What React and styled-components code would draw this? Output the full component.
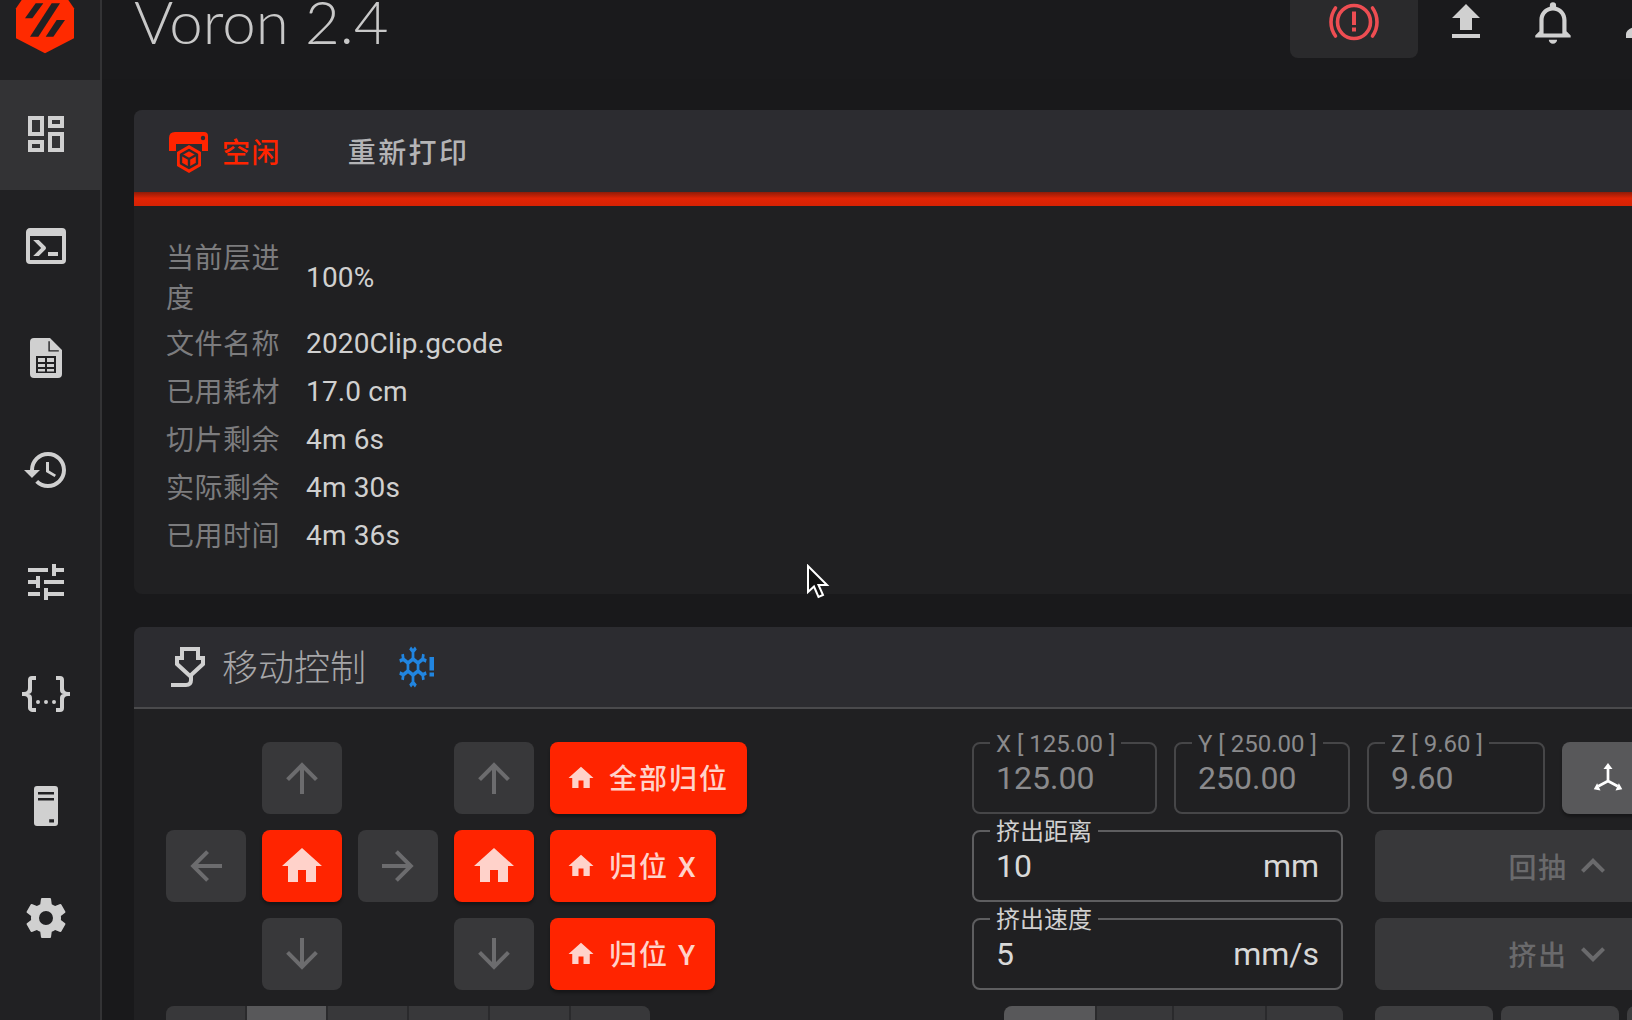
import React from 'react';
import styled, { createGlobalStyle } from 'styled-components';

const FONT = `Roboto, "Noto Sans CJK SC", sans-serif`;
const RED = '#ff2400';

const paths = {
  console: 'M20,19V7H4V19H20M20,3A2,2 0 0,1 22,5V19A2,2 0 0,1 20,21H4A2,2 0 0,1 2,19V5C2,3.89 2.9,3 4,3H20M13,17V15H18V17H13M9.58,13L5.57,9H8.4L11.7,12.3C12.09,12.69 12.09,13.33 11.7,13.72L8.42,17H5.59L9.58,13Z',
  dashboard: 'M19 5v2h-4V5h4M9 5v6H5V5h4m10 8v6h-4v-6h4M9 17v2H5v-2h4M21 3h-8v6h8V3zM11 3H3v10h8V3zm10 8h-8v10h8V11zm-10 4H3v6h8v-6z',
  history: 'M13 3a9 9 0 0 0-9 9H1l3.89 3.89.07.14L9 12H6c0-3.87 3.13-7 7-7s7 3.13 7 7-3.13 7-7 7c-1.93 0-3.68-.79-4.94-2.06l-1.42 1.42A8.954 8.954 0 0 0 13 21a9 9 0 0 0 0-18zm-1 5v5l4.28 2.54.72-1.21-3.5-2.08V8H12z',
  tune: 'M3 17v2h6v-2H3zM3 5v2h10V5H3zm10 16v-2h8v-2h-8v-2h-2v6h2zM7 9v2H3v2h4v2h2V9H7zm14 4v-2H11v2h10zm-6-4h2V7h4V5h-4V3h-2v6z',
  json: 'M5,3H7V5H5V10A2,2 0 0,1 3,12A2,2 0 0,1 5,14V19H7V21H5C3.93,20.73 3,20.1 3,19V15A2,2 0 0,0 1,13H0V11H1A2,2 0 0,0 3,9V5A2,2 0 0,1 5,3M19,3A2,2 0 0,1 21,5V9A2,2 0 0,0 23,11H24V13H23A2,2 0 0,0 21,15V19A2,2 0 0,1 19,21H17V19H19V14A2,2 0 0,1 21,12A2,2 0 0,1 19,10V5H17V3H19M12,15A1,1 0 0,1 13,16A1,1 0 0,1 12,17A1,1 0 0,1 11,16A1,1 0 0,1 12,15M8,15A1,1 0 0,1 9,16A1,1 0 0,1 8,17A1,1 0 0,1 7,16A1,1 0 0,1 8,15M16,15A1,1 0 0,1 17,16A1,1 0 0,1 16,17A1,1 0 0,1 15,16A1,1 0 0,1 16,15Z',
  cog: 'M12,15.5A3.5,3.5 0 0,1 8.5,12A3.5,3.5 0 0,1 12,8.5A3.5,3.5 0 0,1 15.5,12A3.5,3.5 0 0,1 12,15.5M19.43,12.97C19.47,12.65 19.5,12.33 19.5,12C19.5,11.67 19.47,11.34 19.43,11L21.54,9.37C21.73,9.22 21.78,8.95 21.66,8.73L19.66,5.27C19.54,5.05 19.27,4.96 19.05,5.05L16.56,6.05C16.04,5.66 15.5,5.32 14.87,5.07L14.5,2.42C14.46,2.18 14.25,2 14,2H10C9.75,2 9.54,2.18 9.5,2.42L9.13,5.07C8.5,5.32 7.96,5.66 7.44,6.05L4.95,5.05C4.73,4.96 4.46,5.05 4.34,5.27L2.34,8.73C2.21,8.95 2.27,9.22 2.46,9.37L4.57,11C4.53,11.34 4.5,11.67 4.5,12C4.5,12.33 4.53,12.65 4.57,12.97L2.46,14.63C2.27,14.78 2.21,15.05 2.34,15.27L4.34,18.73C4.46,18.95 4.73,19.03 4.95,18.95L7.44,17.94C7.96,18.34 8.5,18.68 9.13,18.93L9.5,21.58C9.54,21.82 9.75,22 10,22H14C14.25,22 14.46,21.82 14.5,21.58L14.87,18.93C15.5,18.67 16.04,18.34 16.56,17.94L19.05,18.95C19.27,19.03 19.54,18.95 19.66,18.73L21.66,15.27C21.78,15.05 21.73,14.78 21.54,14.63L19.43,12.97Z',
  home: 'M10,20V14H14V20H19V12H22L12,3L2,12H5V20H10Z',
  up: 'M13,20H11V8L5.5,13.5L4.08,12.08L12,4.16L19.92,12.08L18.5,13.5L13,8V20Z',
  down: 'M11,4H13V16L18.5,10.5L19.92,11.92L12,19.84L4.08,11.92L5.5,10.5L11,16V4Z',
  left: 'M20,11V13H8L13.5,18.5L12.08,19.92L4.16,12L12.08,4.08L13.5,5.5L8,11H20Z',
  right: 'M4,11V13H16L10.5,18.5L11.92,19.92L19.84,12L11.92,4.08L10.5,5.5L16,11H4Z',
  chevronUp: 'M7.41,15.41L12,10.83L16.59,15.41L18,14L12,8L6,14L7.41,15.41Z',
  chevronDown: 'M7.41,8.58L12,13.17L16.59,8.58L18,10L12,16L6,10L7.41,8.58Z',
  upload: 'M9,16V10H5L12,3L19,10H15V16H9M5,20V18H19V20H5Z',
  bell: 'M16,17H7V10.5C7,8 9,6 11.5,6C14,6 16,8 16,10.5M18,16V10.5C18,7.43 15.86,4.86 13,4.18V3.5A1.5,1.5 0 0,0 11.5,2A1.5,1.5 0 0,0 10,3.5V4.18C7.13,4.86 5,7.43 5,10.5V16L3,18V19H20V18M11.5,22A2,2 0 0,0 13.5,20H9.5A2,2 0 0,0 11.5,22Z',
  account: 'M12,4A4,4 0 0,1 16,8A4,4 0 0,1 12,12A4,4 0 0,1 8,8A4,4 0 0,1 12,4M12,14C16.42,14 20,15.79 20,18V20H4V18C4,15.79 7.58,14 12,14Z',
};

const Global = createGlobalStyle`
  html, body {
    margin: 0;
    background: #19191b;
    overflow: hidden;
  }
  * { box-sizing: border-box; }
`;

const Page = styled.div`
  position: relative;
  display: flex;
  width: 1632px;
  height: 1020px;
  overflow: hidden;
  font-family: ${FONT};
  background: #19191b;
`;

const Sidebar = styled.nav`
  flex: 0 0 102px;
  background: #212123;
  border-right: 2px solid #333335;
`;

const LogoSlot = styled.div`
  height: 78px;
  padding-left: 5px;
`;

const NavItem = styled.div`
  display: flex;
  align-items: center;
  justify-content: center;
  height: 112px;
  padding-right: 8px;
  color: #d0d0d0;
  background: ${p => (p.$active ? 'linear-gradient(transparent 2px, #333335 2px)' : 'transparent')};
`;

const Svg = styled.svg`
  display: block;
  flex: none;
  fill: currentColor;
`;

const BrakeSvg = styled(Svg)`
  margin-top: -2px;
`;

const StatusSvg = styled(Svg)`
  margin-top: 4px;
`;

const SnowSvg = styled(Svg)`
  color: #2185e0;
`;

const Main = styled.main`
  flex: none;
  width: 1700px;
`;

const Header = styled.header`
  display: flex;
  align-items: flex-start;
  width: 1584px;
  height: 79px;
  padding-left: 32px;
  color: #d0d0d0;
  background: #1a1a1c;
  overflow: hidden;
`;

const Title = styled.div`
  flex: 1;
  margin-top: -11px;
  font-family: Lato, sans-serif;
  font-weight: 300;
  font-size: 60px;
  line-height: 64px;
  color: #c8c8c8;
`;

const StopButton = styled.div`
  display: flex;
  justify-content: center;
  width: 128px;
  height: 58px;
  margin-right: 4px;
  color: #ee4d52;
  background: #2a2a2c;
  border-radius: 0 0 8px 8px;
`;

const HeaderIcon = styled.div`
  display: flex;
  justify-content: center;
  width: 88px;
  margin-top: -2px;
`;

const Content = styled.div`
  display: flex;
  flex-direction: column;
  gap: 33px;
  padding: 31px 0 0 32px;
`;

const Card = styled.section`
  background: #202022;
  border-radius: 8px 0 0 8px;
`;

const StatusBar = styled.div`
  display: flex;
  align-items: center;
  height: 82px;
  padding-left: 35px;
  color: ${RED};
  background: #2c2c30;
  border-radius: 8px 0 0 0;
`;

const StatusText = styled.span`
  margin-left: 11px;
  font-size: 28px;
  font-weight: 500;
  letter-spacing: 1.4px;
  color: ${p => p.$color};
`;

const ReprintText = styled(StatusText)`
  margin-left: 67px;
  letter-spacing: 2.4px;
`;

const Progress = styled.div`
  height: 14px;
  background: linear-gradient(#8e1c08, #e02405 45%, #d62204);
`;

const InfoTable = styled.div`
  display: grid;
  grid-template-columns: 140px 1fr;
  padding: 29px 32px 35px;
  font-size: 28px;
`;

const InfoLabel = styled.div`
  display: flex;
  align-items: center;
  width: 120px;
  min-height: 48px;
  padding-top: 4px;
  line-height: 40px;
  letter-spacing: .5px;
  color: #7c7c7e;
`;

const InfoValue = styled.div`
  display: flex;
  align-items: center;
  letter-spacing: .15px;
  color: #d0d0d0;
`;

const ToolBar = styled.div`
  display: flex;
  align-items: center;
  height: 82px;
  padding-left: 36px;
  color: #d0d0d0;
  background: #2c2c30;
  border-bottom: 2px solid #4a4a4c;
  border-radius: 8px 0 0 0;
`;

const ToolTitle = styled.h2`
  margin: 0 29px 4px 16px;
  font-size: 36px;
  font-weight: 300;
  color: #a6a6a8;
`;

const ToolBody = styled.div`
  display: flex;
  height: 320px;
  padding: 33px 0 0 32px;
`;

const JogColumn = styled.div`
  flex: 0 0 806px;
  display: flex;
  flex-direction: column;
  gap: 16px;
`;

const JogGrid = styled.div`
  display: grid;
  grid-template-columns: repeat(4, 80px) auto;
  grid-auto-rows: 72px;
  gap: 16px;
  justify-content: start;
  justify-items: start;
`;

const JogButton = styled.button`
  grid-column: ${p => p.$col};
  display: flex;
  align-items: center;
  justify-content: center;
  width: 80px;
  height: 72px;
  padding: 0;
  border: 0;
  border-radius: 8px;
  color: ${p => (p.$home ? '#ffd2ca' : '#6c6c6e')};
  background: ${p => (p.$home ? RED : '#38383a')};
  box-shadow: ${p => (p.$home ? '0 3px 3px rgba(0,0,0,.3)' : 'none')};
`;

const HomeButton = styled.button`
  grid-column: 5;
  display: flex;
  align-items: center;
  height: 72px;
  padding: 0 18px 0 16px;
  border: 0;
  border-radius: 8px;
  font-family: ${FONT};
  font-size: 28px;
  font-weight: 500;
  letter-spacing: 2px;
  white-space: pre;
  color: #ffd2ca;
  background: ${RED};
  box-shadow: 0 3px 3px rgba(0,0,0,.3);
  span { margin: 0 0 3px 13px; }
`;

const Segments = styled.div`
  display: grid;
  grid-template-columns: ${p => p.$cols};
  gap: 2px;
  width: ${p => p.$width}px;
  margin-left: ${p => p.$offset || 0}px;
  height: 72px;
  background: #2a2a2c;
  border-radius: 8px;
  overflow: hidden;
`;

const Segment = styled.div`
  background: ${p => (p.$active ? '#58585a' : '#38383a')};
`;

const ControlColumn = styled.div`
  flex: none;
  display: flex;
  flex-direction: column;
  gap: 16px;
`;

const ControlRow = styled.div`
  display: flex;
  gap: ${p => p.$gap}px;
`;

const Field = styled.div`
  position: relative;
  display: flex;
  align-items: center;
  justify-content: space-between;
  width: ${p => p.$width}px;
  height: 72px;
  padding: 0 22px 0 22px;
  font-size: 32px;
  color: ${p => (p.$disabled ? '#8a8a8c' : '#d8d8d8')};
  border: 2px solid ${p => (p.$disabled ? '#464648' : '#5e5e60')};
  border-radius: 8px;
`;

const FieldLabel = styled.label`
  position: absolute;
  top: -11px;
  left: 16px;
  padding: 0 6px;
  font-size: 24px;
  line-height: 22px;
  white-space: nowrap;
  color: ${p => (p.$disabled ? '#8a8a8c' : '#d0d0d0')};
  background: #202022;
`;

const AxisButton = styled.button`
  display: flex;
  align-items: center;
  justify-content: center;
  width: 92px;
  height: 72px;
  padding: 0;
  border: 0;
  border-radius: 8px;
  color: #fff;
  background: #58585a;
  box-shadow: 0 3px 3px rgba(0,0,0,.3);
`;

const ExtrudeButton = styled.button`
  display: flex;
  align-items: center;
  justify-content: center;
  gap: 2px;
  width: 376px;
  height: 72px;
  padding: 0;
  border: 0;
  border-radius: 8px;
  font-family: ${FONT};
  font-size: 28px;
  font-weight: 500;
  letter-spacing: 1.4px;
  color: #6a6a6c;
  background: #38383a;
`;

const SmallButton = styled.div`
  width: 118px;
  height: 72px;
  border-radius: 8px;
  background: #3e3e40;
`;

const Pointer = styled.svg`
  position: absolute;
  left: 806px;
  top: 564px;
`;

const Mdi = ({ d, size = 48 }) => (
  <Svg width={size} height={size} viewBox="0 0 24 24"><path d={d} /></Svg>
);

const Logo = () => (
  <Svg width="80" height="65" viewBox="0 0 240 195">
    <polygon fill="#ff2a00" points="50,0 190,0 207,25 207,115 120,160 33,115 33,25" />
    <g fill="#212123">
      <polygon points="60,55 92,10 115,10 82,55" />
      <polygon points="75,110 140,10 165,10 100,110" />
      <polygon points="122,110 155,60 180,60 145,110" />
    </g>
  </Svg>
);

const FileTable = () => (
  <Svg width="48" height="48" viewBox="0 0 24 24">
    <path fillRule="evenodd" d="M6,2H14L20,8V20A2,2 0 0,1 18,22H6A2,2 0 0,1 4,20V4A2,2 0 0,1 6,2M13.2,3.6V8.8H18.4V8.1H13.9V3.6H13.2M7,11V19.5H17V11H7Z" />
    <path d="M8,12H11.5V14H8ZM12.5,12H16V14H12.5ZM8,15H11.5V16.5H8ZM12.5,15H16V16.5H12.5ZM8,17.5H11.5V18.8H8ZM12.5,17.5H16V18.8H12.5Z" />
  </Svg>
);

const Server = () => (
  <Svg width="48" height="48" viewBox="0 0 24 24">
    <path fillRule="evenodd" d="M7.5,2H16.5A1.5,1.5 0 0,1 18,3.5V20.5A1.5,1.5 0 0,1 16.5,22H7.5A1.5,1.5 0 0,1 6,20.5V3.5A1.5,1.5 0 0,1 7.5,2M8,5V6.2H16V5H8M8,8V9.2H16V8H8M13.6,18.6V20.2H16V18.6H13.6Z" />
  </Svg>
);

const BrakeAlert = () => (
  <BrakeSvg width="50" height="48" viewBox="0 0 50 48">
    <g fill="none" stroke="currentColor" strokeWidth="3.6">
      <circle cx="25" cy="24" r="16.5" />
      <path d="M6.5,10 A24,24 0 0,0 6.5,38" strokeLinecap="round" />
      <path d="M43.5,10 A24,24 0 0,1 43.5,38" strokeLinecap="round" />
    </g>
    <rect x="23" y="13.5" width="4" height="13.5" />
    <rect x="23" y="29.5" width="4" height="4" />
  </BrakeSvg>
);

const StatusIcon = () => (
  <StatusSvg width="42" height="44" viewBox="0 0 42 44">
    <path d="M6,1H35Q39,1 39,5V20H33V13H7V20H0V7Q0,1 6,1Z" />
    <circle cx="34" cy="7" r="2.2" fill="#2c2c30" />
    <polygon points="20,14 32,21 32,35 20,42 8,35 8,21" />
    <g fill="none" stroke="#2c2c30" strokeWidth="2.4" strokeLinejoin="round">
      <polygon points="20,19 28,23.5 28,32.5 20,37 12,32.5 12,23.5" />
      <path d="M12,23.5L20,28L28,23.5M20,28V37" />
    </g>
  </StatusSvg>
);

const NozzleIcon = () => (
  <Svg width="36" height="42" viewBox="0 0 36 42">
    <g fill="none" stroke="currentColor" strokeWidth="4">
      <path d="M12,3H28V12H33V18L20,30L7,18V12H12Z" />
      <path d="M1,39H16Q21,39 21,34V29" />
    </g>
  </Svg>
);

const SnowAlert = () => {
  const arms = [0, 60, 120, 180, 240, 300];
  return (
    <SnowSvg width="42" height="48" viewBox="0 0 42 48">
      <g transform="translate(18 24) scale(.72 1)" fill="none" stroke="currentColor" strokeWidth="3.8" strokeLinejoin="round">
        <polygon points="0,-8 7,-4 7,4 0,8 -7,4 -7,-4" />
        {arms.map(a => (
          <path key={a} transform={`rotate(${a})`} d="M0,-8V-17M-4,-19L0,-15.5L4,-19" />
        ))}
      </g>
      <rect x="34.5" y="14" width="4.5" height="13.5" />
      <rect x="34.5" y="29.5" width="4.5" height="4" />
    </SnowSvg>
  );
};

const AxisIcon = () => (
  <Svg width="36" height="36" viewBox="0 0 48 48">
    <g fill="none" stroke="currentColor" strokeWidth="3.6">
      <path d="M24,28V10M24,28L11,35M24,28L37,35" />
    </g>
    <polygon points="24,4 30,12 18,12" />
    <polygon points="5,39 14,40.5 9.5,31" />
    <polygon points="43,39 34,40.5 38.5,31" />
  </Svg>
);

const navItems = [
  <Mdi d={paths.dashboard} />,
  <Mdi d={paths.console} />,
  <FileTable />,
  <Mdi d={paths.history} />,
  <Mdi d={paths.tune} />,
  <Mdi d={paths.json} />,
  <Server />,
  <Mdi d={paths.cog} />,
];

const infoRows = [
  ['当前层进度', '100%'],
  ['文件名称', '2020Clip.gcode'],
  ['已用耗材', '17.0 cm'],
  ['切片剩余', '4m 6s'],
  ['实际剩余', '4m 30s'],
  ['已用时间', '4m 36s'],
];

const App = () => (
  <Page>
    <Global />
    <Sidebar>
      <LogoSlot><Logo /></LogoSlot>
      {navItems.map((icon, i) => (
        <NavItem key={i} $active={i === 0}>{icon}</NavItem>
      ))}
    </Sidebar>

    <Main>
      <Header>
        <Title>Voron 2.4</Title>
        <StopButton><BrakeAlert /></StopButton>
        <HeaderIcon><Mdi d={paths.upload} /></HeaderIcon>
        <HeaderIcon><Mdi d={paths.bell} size={50} /></HeaderIcon>
        <HeaderIcon><Mdi d={paths.account} /></HeaderIcon>
      </Header>

      <Content>
        <Card>
          <StatusBar>
            <StatusIcon />
            <StatusText $color={RED}>空闲</StatusText>
            <ReprintText $color="#b4b4b6">重新打印</ReprintText>
          </StatusBar>
          <Progress />
          <InfoTable>
            {infoRows.map(([label, value]) => (
              <React.Fragment key={label}>
                <InfoLabel>{label}</InfoLabel>
                <InfoValue>{value}</InfoValue>
              </React.Fragment>
            ))}
          </InfoTable>
        </Card>

        <Card>
          <ToolBar>
            <NozzleIcon />
            <ToolTitle>移动控制</ToolTitle>
            <SnowAlert />
          </ToolBar>
          <ToolBody>
            <JogColumn>
              <JogGrid>
                <JogButton $col={2}><Mdi d={paths.up} /></JogButton>
                <JogButton $col={4}><Mdi d={paths.up} /></JogButton>
                <HomeButton><Mdi d={paths.home} size={30} /><span>全部归位</span></HomeButton>

                <JogButton $col={1}><Mdi d={paths.left} /></JogButton>
                <JogButton $col={2} $home><Mdi d={paths.home} /></JogButton>
                <JogButton $col={3}><Mdi d={paths.right} /></JogButton>
                <JogButton $col={4} $home><Mdi d={paths.home} /></JogButton>
                <HomeButton><Mdi d={paths.home} size={30} /><span>归位 X</span></HomeButton>

                <JogButton $col={2}><Mdi d={paths.down} /></JogButton>
                <JogButton $col={4}><Mdi d={paths.down} /></JogButton>
                <HomeButton><Mdi d={paths.home} size={30} /><span>归位 Y</span></HomeButton>
              </JogGrid>
              <Segments $cols="repeat(6, 1fr)" $width={484}>
                {[0, 1, 2, 3, 4, 5].map(i => <Segment key={i} $active={i === 1} />)}
              </Segments>
            </JogColumn>

            <ControlColumn>
              <ControlRow $gap={17}>
                <Field $width={185} $disabled><FieldLabel $disabled>X [ 125.00 ]</FieldLabel>125.00</Field>
                <Field $width={176} $disabled><FieldLabel $disabled>Y [ 250.00 ]</FieldLabel>250.00</Field>
                <Field $width={178} $disabled><FieldLabel $disabled>Z [ 9.60 ]</FieldLabel>9.60</Field>
                <AxisButton><AxisIcon /></AxisButton>
              </ControlRow>
              <ControlRow $gap={32}>
                <Field $width={371}><FieldLabel>挤出距离</FieldLabel><span>10</span><span>mm</span></Field>
                <ExtrudeButton>回抽<Mdi d={paths.chevronUp} /></ExtrudeButton>
              </ControlRow>
              <ControlRow $gap={32}>
                <Field $width={371}><FieldLabel>挤出速度</FieldLabel><span>5</span><span>mm/s</span></Field>
                <ExtrudeButton>挤出<Mdi d={paths.chevronDown} /></ExtrudeButton>
              </ControlRow>
              <ControlRow $gap={32}>
                <Segments $cols="93fr 76fr 93fr 77fr" $width={339} $offset={32}>
                  {[0, 1, 2, 3].map(i => <Segment key={i} $active={i === 0} />)}
                </Segments>
                <ControlRow $gap={8}>
                  <SmallButton />
                  <SmallButton />
                  <SmallButton />
                </ControlRow>
              </ControlRow>
            </ControlColumn>
          </ToolBody>
        </Card>
      </Content>
    </Main>

    <Pointer width="26" height="36" viewBox="0 0 26 36">
      <polygon points="2,2 2,28 8,22.5 12.5,33 17,31 12.5,21 21,21" fill="#111" stroke="#fff" strokeWidth="2" />
    </Pointer>
  </Page>
);

export default App;
